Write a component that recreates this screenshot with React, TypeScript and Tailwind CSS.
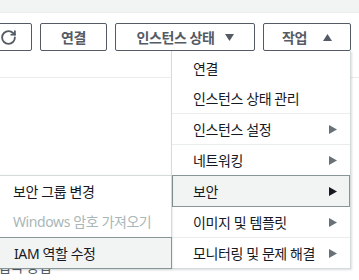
import { RotateCw } from "lucide-react";

const Arrow = ({ dark }: { dark?: boolean }) => (
  <svg width="8" height="9" viewBox="0 0 8 9" className="shrink-0">
    <polygon points="0,0 8,4.5 0,9" fill={dark ? "#16191f" : "#687078"} />
  </svg>
);

const Item = ({ label, arrow }: { label: string; arrow?: boolean }) => (
  <div className="h-[30px] flex items-center justify-between pl-[21px] pr-[13px] whitespace-nowrap">
    <span>{label}</span>
    {arrow && <Arrow />}
  </div>
);

const Divider = () => <div className="h-px bg-[#eaeded]" />;

export default function App() {
  return (
    <div className="relative w-[359px] h-[280px] overflow-hidden bg-white font-['Noto_Sans','Noto_Sans_CJK_KR',sans-serif] text-[14px] tracking-[-0.4px] text-[#16191f]">
      <div className="h-[13px] bg-[#f2f3f3] border-b border-[#eaeded]" />
      <div className="flex gap-[8px] mt-[10px] ml-[-15px] h-[28px] font-bold text-[#545b64]">
        <div className="w-[47px] shrink-0 flex items-center justify-center border border-[#545b64] rounded-[2px]">
          <RotateCw size={17} strokeWidth={2.6} />
        </div>
        <div className="w-[67px] shrink-0 flex items-center justify-center border border-[#545b64] rounded-[2px]">
          연결
        </div>
        <div className="w-[140px] shrink-0 flex items-center justify-center gap-[10px] border border-[#545b64] rounded-[2px]">
          <span>인스턴스 상태</span>
          <svg width="9" height="7" viewBox="0 0 9 7">
            <polygon points="0,0 9,0 4.5,7" fill="#545b64" />
          </svg>
        </div>
        <div className="w-[88px] shrink-0 flex items-center justify-center gap-[16px] border border-[#545b64] rounded-[2px]">
          <span>작업</span>
          <svg width="9" height="7" viewBox="0 0 9 7">
            <polygon points="0,7 9,7 4.5,0" fill="#545b64" />
          </svg>
        </div>
      </div>
      <div className="mt-[26px] border-b border-[#eaeded]" />
      <div className="mt-[178px] ml-[-2px] text-[#545b64] whitespace-nowrap">접속 방법</div>

      {/* main dropdown */}
      <div className="absolute left-[171px] top-[51px] w-[180px] bg-white border-x border-b border-[#d5dbdb] pt-[2px] shadow-[1px_1px_2px_rgba(0,28,36,0.15)]">
        <Item label="연결" />
        <Item label="인스턴스 상태 관리" />
        <Divider />
        <Item label="인스턴스 설정" arrow />
        <Divider />
        <Item label="네트워킹" arrow />
        <div className="h-[32px] flex items-center justify-between pl-[20px] pr-[12px] bg-[#f2f3f3] border border-[#879596]">
          <span>보안</span>
          <Arrow dark />
        </div>
        <Item label="이미지 및 템플릿" arrow />
        <Divider />
        <Item label="모니터링 및 문제 해결" arrow />
      </div>

      {/* submenu */}
      <div className="absolute z-10 left-[-8px] top-[175px] w-[180px] bg-white border-t border-x border-[#d5dbdb] shadow-[0_1px_2px_rgba(0,28,36,0.2)]">
        <div className="h-[30px] flex items-center pl-[20px] whitespace-nowrap">보안 그룹 변경</div>
        <div className="h-[31px] flex items-center pl-[20px] whitespace-nowrap text-[#aab7b8]">Windows 암호 가져오기</div>
        <div className="h-[32px] -mx-px flex items-center pl-[21px] whitespace-nowrap bg-[#f2f3f3] border border-[#879596]">IAM 역할 수정</div>
      </div>
    </div>
  );
}
